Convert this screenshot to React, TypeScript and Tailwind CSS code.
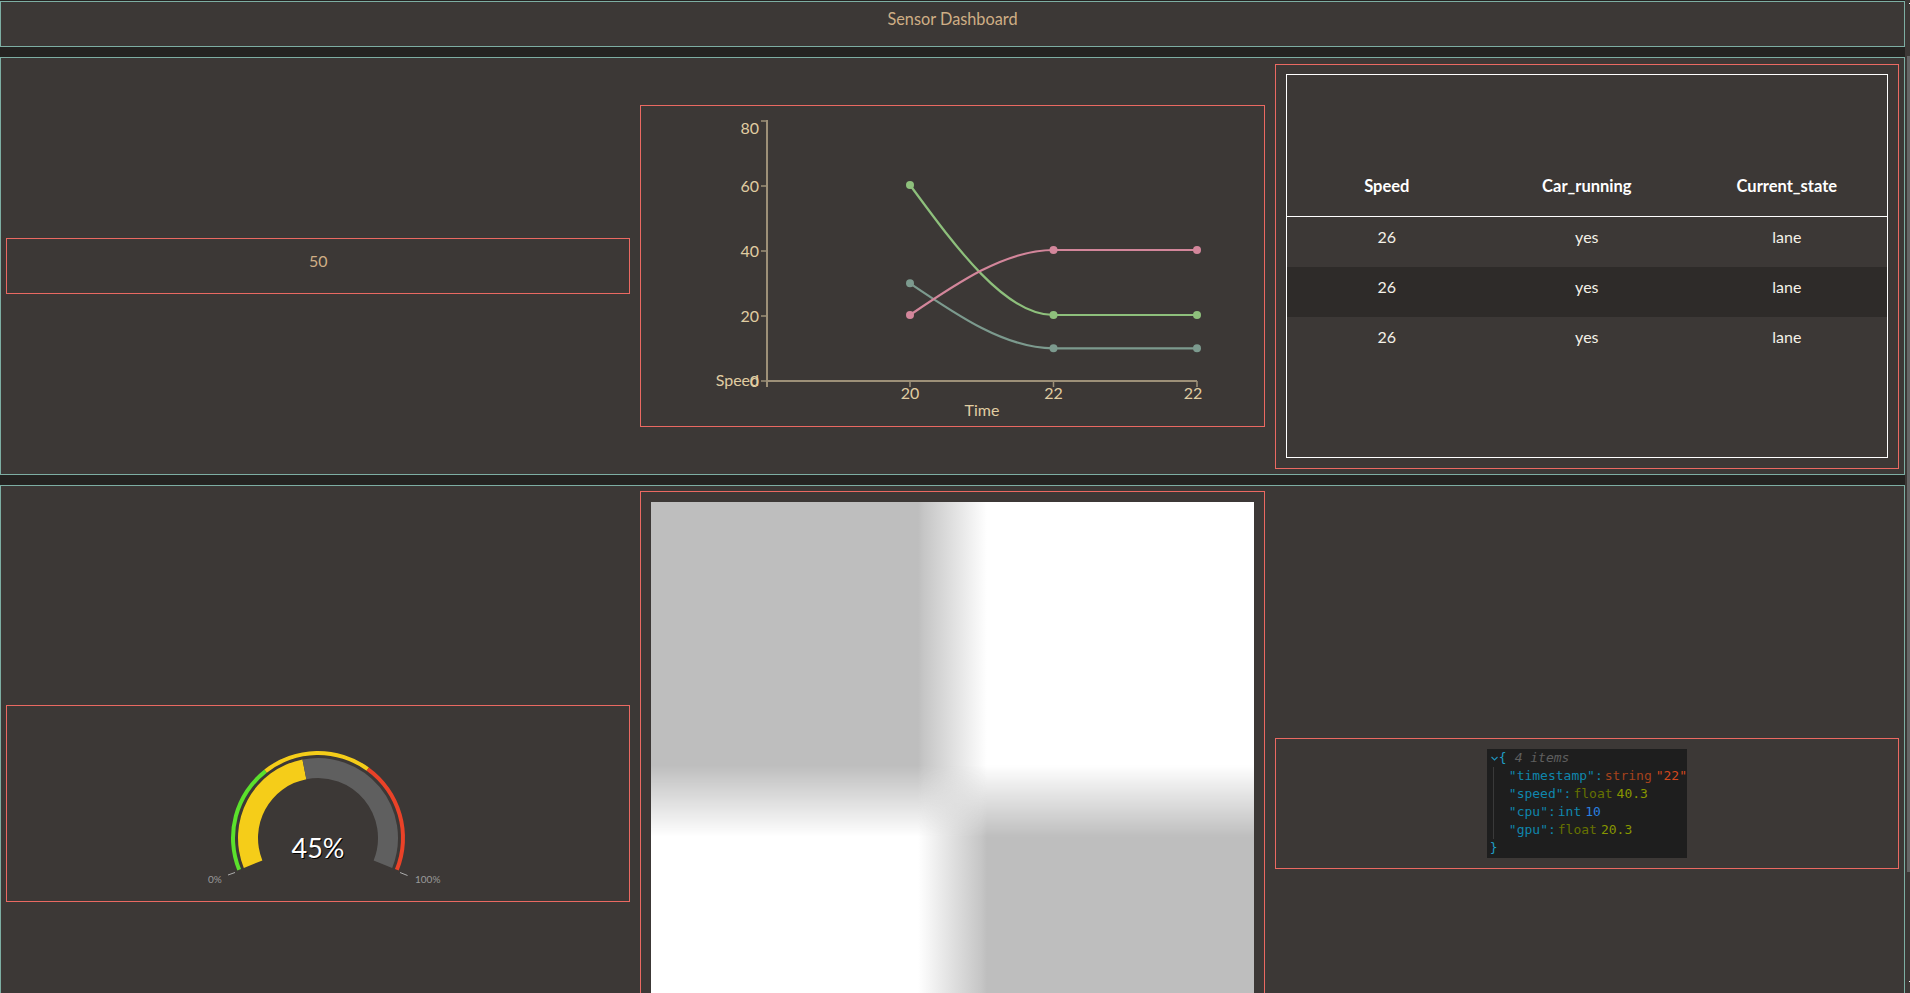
const PANEL_BORDER = "border border-[#7daea3] bg-[#3c3836]";
const CARD_BORDER = "border border-[#ea6962]";

const SANS = "font-['Lato','Noto_Sans',sans-serif]";

const rows = [
  { speed: 26, running: "yes", state: "lane" },
  { speed: 26, running: "yes", state: "lane" },
  { speed: 26, running: "yes", state: "lane" },
];

// monotone curves, control points worked out from the data
const series = [
  { color: "#7c9a8e", y: [283.3, 348.3] },
  { color: "#8ec07c", y: [185, 315] },
  { color: "#d3869b", y: [315, 250] },
];

const X = [910, 1053.5, 1197];
const AXIS = "#9d9078";
const LABEL = "#e0cda2";

function LineChart() {
  const ticks = [
    { y: 121, label: "80", textY: 134 },
    { y: 186, label: "60", textY: 192 },
    { y: 251, label: "40", textY: 257 },
    { y: 316, label: "20", textY: 322 },
    { y: 381, label: "0", textY: 387 },
  ];
  return (
    <svg width="600" height="320" viewBox="652 106 600 320" className={SANS}>
      <line x1="767" y1="120" x2="767" y2="387" stroke={AXIS} strokeWidth="2" />
      <line x1="767" y1="381" x2="1197" y2="381" stroke={AXIS} strokeWidth="2" />
      {ticks.map((t) => (
        <g key={t.label}>
          <line x1="761" y1={t.y} x2="767" y2={t.y} stroke={AXIS} strokeWidth="1.5" />
          <text x="759" y={t.textY} textAnchor="end" fontSize="16" fill={LABEL}>
            {t.label}
          </text>
        </g>
      ))}
      {X.map((x, i) => (
        <g key={i}>
          <line x1={x} y1="381" x2={x} y2="387" stroke={AXIS} strokeWidth="1.5" />
          <text x={i === 2 ? x - 4 : x} y="399" textAnchor="middle" fontSize="16" fill={LABEL}>
            {i === 0 ? "20" : "22"}
          </text>
        </g>
      ))}
      <text x="759" y="386" textAnchor="end" fontSize="16" fill={LABEL}>
        Speed
      </text>
      <text x="982" y="416" textAnchor="middle" fontSize="16" fill={LABEL}>
        Time
      </text>
      {series.map((s) => {
        const [a, b] = s.y;
        const d = `M${X[0]},${a}C${X[0] + 47.8},${a + (b - a) / 2} ${X[1] - 47.8},${b} ${X[1]},${b}L${X[2]},${b}`;
        return (
          <g key={s.color}>
            <path d={d} fill="none" stroke={s.color} strokeWidth="2.2" />
            <circle cx={X[0]} cy={a} r="4" fill={s.color} />
            <circle cx={X[1]} cy={b} r="4" fill={s.color} />
            <circle cx={X[2]} cy={b} r="4" fill={s.color} />
          </g>
        );
      })}
    </svg>
  );
}

// angle in degrees, measured clockwise from the left horizontal
function pt(r: number, deg: number) {
  const a = (deg * Math.PI) / 180;
  return [318 - r * Math.cos(a), 838 - r * Math.sin(a)].map((n) => n.toFixed(2)).join(",");
}

function band(r0: number, r1: number, from: number, to: number) {
  const large = to - from > 180 ? 1 : 0;
  return `M${pt(r1, from)}A${r1},${r1} 0 ${large} 1 ${pt(r1, to)}L${pt(r0, to)}A${r0},${r0} 0 ${large} 0 ${pt(r0, from)}Z`;
}

function Gauge() {
  const start = -22;
  const span = 224;
  const at = (f: number) => start + span * f;
  return (
    <svg width="250" height="195" viewBox="193 706 250 195" className={SANS}>
      <path d={band(60, 80, at(0), at(0.45))} fill="#f5cd19" />
      <path d={band(60, 80, at(0.45), at(1))} fill="#5f5f5f" />
      <path d={band(83, 87, at(0), at(0.33))} fill="#5be12c" />
      <path d={band(83, 87, at(0.33), at(0.66))} fill="#f5cd19" />
      <path d={band(83, 87, at(0.66), at(1))} fill="#ea4228" />
      <line x1="228" y1="875" x2="235" y2="872.5" stroke="#adadad" />
      <line x1="400" y1="872.5" x2="407.5" y2="875.5" stroke="#adadad" />
      <text x="208" y="882.5" fontSize="10" fill="#9a9a9a">
        0%
      </text>
      <text x="415" y="882.5" fontSize="10" fill="#9a9a9a">
        100%
      </text>
      <text
        x="318"
        y="858"
        textAnchor="middle"
        fontSize="27"
        fill="#ffffff"
        className="[text-shadow:black_1px_0.5px_0px]"
      >
        45%
      </text>
    </svg>
  );
}

function JsonEntry({ name, type, value, typeColor, valueColor }: { name: string; type: string; value: string; typeColor: string; valueColor: string }) {
  return (
    <div className="h-[18px] pl-[22px] flex items-center whitespace-nowrap">
      <span className="text-[#0f86ad]">"{name}"</span>
      <span className="text-[#0f86ad] mr-[2px]">:</span>
      <span className={`mr-[4px] ${typeColor}`}>{type}</span>
      <span className={valueColor}>{value}</span>
    </div>
  );
}

function JsonView() {
  return (
    <div className="relative w-[200px] h-[109px] bg-[#1e1e1e] font-['DejaVu_Sans_Mono',monospace] text-[13px] leading-[18px] overflow-hidden">
      <div className="h-[18px] flex items-center pl-[3px]">
        <svg width="9" height="9" viewBox="0 0 9 9">
          <path d="M1.5 3 L4.5 6 L7.5 3" fill="none" stroke="#1f8fb8" strokeWidth="1.2" />
        </svg>
        <span className="text-[#1f9cc4]">&#123;</span>
        <span className="ml-[8px] italic text-[#5f5f5f]">4 items</span>
      </div>
      <JsonEntry name="timestamp" type="string" value='"22"' typeColor="text-[#a5421c]" valueColor="text-[#d2481d]" />
      <JsonEntry name="speed" type="float" value="40.3" typeColor="text-[#667200]" valueColor="text-[#879600]" />
      <JsonEntry name="cpu" type="int" value="10" typeColor="text-[#0f86ad]" valueColor="text-[#2a80e0]" />
      <JsonEntry name="gpu" type="float" value="20.3" typeColor="text-[#667200]" valueColor="text-[#879600]" />
      <div className="h-[18px] pl-[3px] flex items-center text-[#1f9cc4]">&#125;</div>
      <div className="absolute left-[6px] top-[18px] h-[72px] w-px bg-[#3a3a3a]" />
    </div>
  );
}

function Table() {
  return (
    <div className={`w-[602px] h-[384px] border border-white text-[16px] text-[#f4f1e8] ${SANS}`}>
      <div className="h-[142px] flex items-end border-b border-white">
        {["Speed", "Car_running", "Current_state"].map((h) => (
          <div key={h} className="w-[200px] pb-[21px] text-center font-bold text-[16.5px] leading-[18px] text-white">
            {h}
          </div>
        ))}
      </div>
      {rows.map((r, i) => (
        <div key={i} className={`h-[50px] flex ${i === 1 ? "bg-[#2e2b29]" : ""}`}>
          <div className="w-[200px] pt-[11px] text-center leading-[18px]">{r.speed}</div>
          <div className="w-[200px] pt-[11px] text-center leading-[18px]">{r.running}</div>
          <div className="w-[200px] pt-[11px] text-center leading-[18px]">{r.state}</div>
        </div>
      ))}
    </div>
  );
}

function BlurredImage() {
  return (
    <div className="relative w-[603px] h-[600px] bg-[linear-gradient(90deg,#bebebe_267px,#c6c6c6_273px,#ffffff_336px)]">
      <div className="absolute inset-0 bg-[linear-gradient(90deg,#ffffff_267px,#c6c6c6_330px,#bebebe_336px)] [mask-image:linear-gradient(180deg,transparent_263px,black_335px)]" />
    </div>
  );
}

export default function App() {
  return (
    <div className="h-[993px] w-[1910px] overflow-hidden flex bg-[#242321]">
      <div className="w-[1905px] shrink-0 pt-px flex flex-col gap-[10px]">
        <header className={`h-[46px] shrink-0 ${PANEL_BORDER} pt-[7px] text-center text-[16.3px] leading-[20px] text-[#cfae85] ${SANS}`}>
          Sensor Dashboard
        </header>

        <section className={`h-[418px] shrink-0 ${PANEL_BORDER} px-[5px] grid grid-cols-3 gap-[10px] items-center`}>
          <div className={`${CARD_BORDER} h-[56px] pb-[11px] flex items-center justify-center text-[16px] text-[#cfae85] ${SANS}`}>50</div>
          <div className={`${CARD_BORDER} h-[322px] flex items-center justify-center`}>
            <LineChart />
          </div>
          <div className={`${CARD_BORDER} h-[405px] flex items-center justify-center`}>
            <Table />
          </div>
        </section>

        <section className={`h-[635px] shrink-0 ${PANEL_BORDER} px-[5px] grid grid-cols-3 gap-[10px] items-center`}>
          <div className={`${CARD_BORDER} h-[197px] mt-px flex items-center justify-center`}>
            <Gauge />
          </div>
          <div className={`${CARD_BORDER} h-[623px] pt-[10px] flex items-start justify-center`}>
            <BlurredImage />
          </div>
          <div className={`${CARD_BORDER} h-[131px] mt-[2px] flex items-center justify-center`}>
            <JsonView />
          </div>
        </section>
      </div>

      {/* page scrollbar */}
      <div className="w-[5px] h-full shrink-0 bg-[#3c3836] relative">
        <div className="absolute left-[4px] top-[3px] w-px h-px bg-white" />
        <div className="absolute left-[2px] top-[56px] w-[3px] h-[816px] bg-[#666666]" />
        <div className="absolute left-[4px] top-[981px] w-px h-px bg-white" />
      </div>
    </div>
  );
}
